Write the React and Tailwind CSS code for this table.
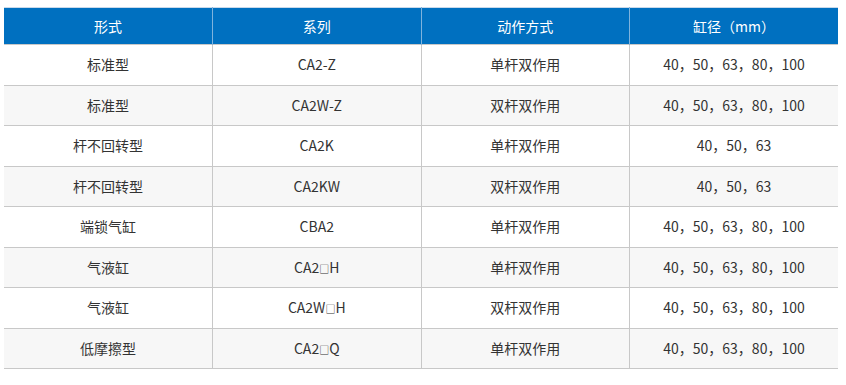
import React from "react";

const Sq = () => <span className="text-[10px] align-baseline">□</span>;

const rows = [
  ["标准型", "CA2-Z", "单杆双作用", "40，50，63，80，100"],
  ["标准型", "CA2W-Z", "双杆双作用", "40，50，63，80，100"],
  ["杆不回转型", "CA2K", "单杆双作用", "40，50，63"],
  ["杆不回转型", "CA2KW", "双杆双作用", "40，50，63"],
  ["端锁气缸", "CBA2", "单杆双作用", "40，50，63，80，100"],
  ["气液缸", <>CA2<Sq />H</>, "单杆双作用", "40，50，63，80，100"],
  ["气液缸", <>CA2W<Sq />H</>, "双杆双作用", "40，50，63，80，100"],
  ["低摩擦型", <>CA2<Sq />Q</>, "单杆双作用", "40，50，63，80，100"],
];

export default function App() {
  return (
    <div className="w-[846px] h-[385px] bg-white pt-[7px] pl-[4px]" style={{ fontFamily: '"Microsoft YaHei", "Noto Sans CJK SC", "Noto Sans", sans-serif' }}>
      <table className="w-[834px] table-fixed border-collapse text-[14px] text-[#333]">
        <thead>
          <tr className="bg-[#0070c0] text-white h-[37px] border-t border-[#c9d9ea]">
            <th className="font-normal border-r border-[#7fb3dd]">形式</th>
            <th className="font-normal border-r border-[#7fb3dd]">系列</th>
            <th className="font-normal border-r border-[#7fb3dd]">动作方式</th>
            <th className="font-normal">缸径（mm）</th>
          </tr>
        </thead>
        <tbody>
          {rows.map((r, i) => (
            <tr key={i} className={(i % 2 === 1 ? "bg-[#f7f7f7] " : "bg-white ") + "h-[40.5px] border-t border-b border-[#c8c8c8]"}>
              <td className="text-center border-r border-[#c8c8c8]">{r[0]}</td>
              <td className="text-center border-r border-[#c8c8c8]">{r[1]}</td>
              <td className="text-center border-r border-[#c8c8c8]">{r[2]}</td>
              <td className="text-center">{r[3]}</td>
            </tr>
          ))}
        </tbody>
      </table>
    </div>
  );
}
